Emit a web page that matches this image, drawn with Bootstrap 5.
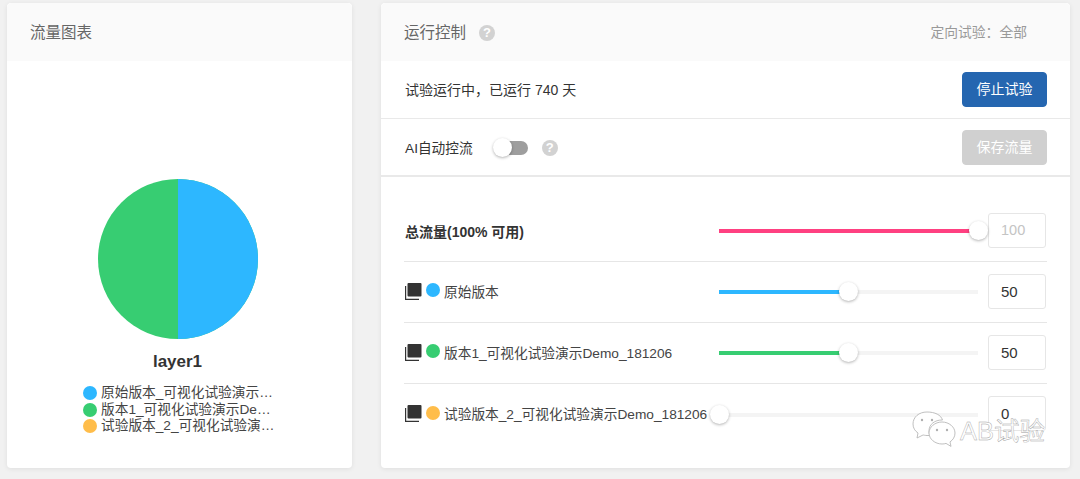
<!DOCTYPE html>
<html lang="zh-CN">
<head>
    <meta charset="UTF-8">
    <meta name="viewport" content="width=device-width, initial-scale=1.0">
    <title>运行控制</title>
    <link href="https://cdn.jsdelivr.net/npm/bootstrap@5.3.0/dist/css/bootstrap.min.css" rel="stylesheet">
    <style>
        body {
            background-color: #f1f1f1;
            color: #333;
            font-family: "Liberation Sans", "Noto Sans CJK SC", sans-serif;
            font-size: 14px;
            height: 479px;
            overflow: hidden;
        }

        .page-wrap {
            position: relative;
            gap: 29px;
            padding: 3px 10px 11px 7px;
            height: 479px;
        }

        .panel {
            border: 0;
            border-radius: 4px;
            background: #fff;
            box-shadow: 0 1px 5px rgba(0, 0, 0, 0.08);
        }

        .panel-left { width: 345px; }
        .panel-right { width: 689px; }

        .panel .card-header {
            height: 58px;
            padding: 2px 23px 0;
            background: #fafafa;
            border: 0;
            font-size: 15.5px;
            color: #666;
        }

        .panel-left .card-body { padding: 118px 0 0; }

        .pie-title {
            font-size: 17px;
            font-weight: 700;
            line-height: 20px;
            margin: 13px 0 13px;
        }

        .legend-list {
            width: 200px;
            margin-left: 76px;
        }

        .legend-row {
            height: 16.5px;
            line-height: 16.5px;
            gap: 4px;
            color: #444;
            font-size: 13.7px;
            white-space: nowrap;
        }

        .dot {
            flex: none;
            display: inline-block;
            width: 14px;
            height: 14px;
            border-radius: 50%;
        }

        .c-blue { background-color: #2db7ff; }
        .c-green { background-color: #37cd72; }
        .c-orange { background-color: #ffbd4a; }
        .c-pink { background-color: #ff4081; }

        .help-mark {
            display: inline-flex;
            align-items: center;
            justify-content: center;
            width: 16px;
            height: 16px;
            border-radius: 50%;
            background: #d2d2d2;
            color: #fff;
            font-size: 13px;
            font-weight: 700;
        }

        .head-help { margin-left: 13px; }

        .target-text {
            color: #999;
            font-size: 13.8px;
            margin-right: 20px;
        }

        .ctrl-row {
            height: 58px;
            padding: 0 23px 0 24px;
            border-bottom: 1px solid #e9e9e9;
            color: #333;
        }

        .ctrl-row + .ctrl-row {
            border-bottom-width: 2px;
        }

        .row-text { padding-top: 2px; }
        .auto-text { padding-top: 5px; font-size: 13.7px; }

        .btn-action {
            width: 85px;
            height: 35px;
            padding: 0;
            font-size: 14px;
            border-radius: 4px;
        }

        .btn-stop { background: #2566b0; border-color: #2566b0; }
        .btn.btn-save, .btn.btn-save:disabled {
            background: #d0d0d0;
            border-color: #d0d0d0;
            color: #fff;
            opacity: 1;
        }

        .toggle {
            position: relative;
            display: inline-block;
            width: 30px;
            height: 14px;
            border-radius: 7px;
            background: #9e9e9e;
            margin: 1px 14px 0 25px;
        }

        .toggle-knob {
            position: absolute;
            left: -5px;
            top: -3px;
            width: 19px;
            height: 19px;
            border-radius: 50%;
            background: #fff;
            box-shadow: 0 1px 3px rgba(0, 0, 0, 0.3);
        }

        .auto-help { margin-top: 2px; }

        .slider-list {
            padding: 24px 23px 0 23px;
        }

        .slider-row {
            height: 61px;
            border-bottom: 1px solid #e6e6e6;
        }

        .slider-row:last-child { border-bottom: 0; }

        .slider-label {
            width: 315px;
            flex: none;
            white-space: nowrap;
            padding: 2px 0 0 1px;
            color: #444;
            font-size: 13.7px;
        }

        .total-label {
            font-weight: 700;
            font-size: 14px;
            color: #333;
        }

        .copy-icon {
            flex: none;
            width: 17px;
            height: 17px;
            margin: 0 4px 4px 0;
        }

        .slider-label .dot { margin: 0 4px 6px 0; }

        .slider-box {
            position: relative;
            width: 259px;
            flex: none;
        }

        .slider-box .progress {
            height: 4px;
            border-radius: 0;
            background: #f4f4f4;
        }

        .slider-box .progress-bar { transition: none; }

        .slider-knob {
            position: absolute;
            top: -8px;
            width: 19px;
            height: 19px;
            margin-left: -9.5px;
            border-radius: 50%;
            background: #fff;
            box-shadow: 0 1px 3px rgba(0, 0, 0, 0.3);
        }

        .flow-input {
            width: 58px;
            height: 35px;
            margin: 0 0 2px 10px;
            padding: 0 12px;
            border: 1px solid #e6e6e6;
            border-radius: 3px;
            font-size: 15px;
            color: #333;
            flex: none;
        }

        .flow-input:disabled {
            background: #fff;
            color: #c4c4c4;
            font-size: 14.5px;
        }

        .watermark {
            position: absolute;
            left: 912px;
            top: 411px;
            gap: 4px;
            pointer-events: none;
        }

        .watermark-text {
            font-size: 25.5px;
            line-height: 34px;
            color: #fff;
            -webkit-text-stroke: 0.4px #a0a0a0;
            margin-top: 3px;
        }
    </style>
</head>
<body>
    <div class="page-wrap d-flex">
        <!-- traffic chart -->
        <div class="card panel panel-left">
            <div class="card-header d-flex align-items-center">流量图表</div>
            <div class="card-body">
                <svg class="d-block mx-auto" width="160" height="160" viewBox="0 0 160 160" style="transform: translateX(-2px)">
                    <circle cx="80" cy="80" r="80" fill="#37cd72"></circle>
                    <path d="M80 0 A80 80 0 0 1 80 160 Z" fill="#2db7ff"></path>
                </svg>
                <div class="pie-title text-center pe-1">layer1</div>
                <div class="legend-list">
                    <div class="legend-row d-flex align-items-center"><span class="dot c-blue"></span><span>原始版本_可视化试验演示…</span></div>
                    <div class="legend-row d-flex align-items-center"><span class="dot c-green"></span><span>版本1_可视化试验演示De…</span></div>
                    <div class="legend-row d-flex align-items-center"><span class="dot c-orange"></span><span>试验版本_2_可视化试验演…</span></div>
                </div>
            </div>
        </div>

        <!-- run control -->
        <div class="card panel panel-right">
            <div class="card-header d-flex align-items-center">
                <span class="ps-0">运行控制</span>
                <span class="help-mark head-help">?</span>
                <span class="target-text ms-auto">定向试验：全部</span>
            </div>
            <div class="ctrl-row d-flex align-items-center justify-content-between">
                <span class="row-text">试验运行中，已运行 740 天</span>
                <button type="button" class="btn btn-primary btn-action btn-stop">停止试验</button>
            </div>
            <div class="ctrl-row d-flex align-items-center">
                <span class="auto-text">AI自动控流</span>
                <span class="toggle"><span class="toggle-knob"></span></span>
                <span class="help-mark auto-help">?</span>
                <button type="button" class="btn btn-action btn-save ms-auto" disabled>保存流量</button>
            </div>

            <div class="slider-list">
                <div class="slider-row d-flex align-items-center">
                    <div class="slider-label total-label">总流量(100% 可用)</div>
                    <div class="slider-box">
                        <div class="progress"><div class="progress-bar c-pink" style="width: 100%"></div></div>
                        <span class="slider-knob" style="left: 100%"></span>
                    </div>
                    <input class="form-control flow-input" type="text" value="100" disabled>
                </div>
                <div class="slider-row d-flex align-items-center">
                    <div class="slider-label d-flex align-items-center">
                        <svg class="copy-icon" viewBox="0 0 17 17"><rect x="2.500" y="0" width="14" height="13.500" rx="1" fill="#333"></rect><path d="M0.600 3V16.400H14" fill="none" stroke="#333" stroke-width="1.200"></path></svg>
                        <span class="dot c-blue"></span>原始版本
                    </div>
                    <div class="slider-box">
                        <div class="progress"><div class="progress-bar c-blue" style="width: 50%"></div></div>
                        <span class="slider-knob" style="left: 50%"></span>
                    </div>
                    <input class="form-control flow-input" type="text" value="50">
                </div>
                <div class="slider-row d-flex align-items-center">
                    <div class="slider-label d-flex align-items-center">
                        <svg class="copy-icon" viewBox="0 0 17 17"><rect x="2.500" y="0" width="14" height="13.500" rx="1" fill="#333"></rect><path d="M0.600 3V16.400H14" fill="none" stroke="#333" stroke-width="1.200"></path></svg>
                        <span class="dot c-green"></span>版本1_可视化试验演示Demo_181206
                    </div>
                    <div class="slider-box">
                        <div class="progress"><div class="progress-bar c-green" style="width: 50%"></div></div>
                        <span class="slider-knob" style="left: 50%"></span>
                    </div>
                    <input class="form-control flow-input" type="text" value="50">
                </div>
                <div class="slider-row d-flex align-items-center">
                    <div class="slider-label d-flex align-items-center">
                        <svg class="copy-icon" viewBox="0 0 17 17"><rect x="2.500" y="0" width="14" height="13.500" rx="1" fill="#333"></rect><path d="M0.600 3V16.400H14" fill="none" stroke="#333" stroke-width="1.200"></path></svg>
                        <span class="dot c-orange"></span>试验版本_2_可视化试验演示Demo_181206
                    </div>
                    <div class="slider-box">
                        <div class="progress"><div class="progress-bar c-orange" style="width: 0%"></div></div>
                        <span class="slider-knob" style="left: 0%"></span>
                    </div>
                    <input class="form-control flow-input" type="text" value="0">
                </div>
            </div>
        </div>

        <!-- account watermark over the panel -->
        <div class="watermark d-flex">
            <svg width="44" height="36" viewBox="0 0 44 36">
                <path d="M15 1C7 1 1 6 1 13c0 4 2 7 5 9l-1 5 6-3c1 0 2 .5 4 .5h3c-1-1.500-1-3-1-4.500 0-7 6-11 13-11h.5C29 4 23 1 15 1Z" fill="#fff" stroke="#b0b0b0" stroke-width=".8"></path>
                <path d="M30 11c-7 0-13 5-13 11s6 11 13 11c1.500 0 3-.2 4-.6l5 3-1-4.500c3-2 5-5 5-8.900 0-6-6-11-13-11Z" fill="#fff" stroke="#b0b0b0" stroke-width=".8"></path>
                <circle cx="10" cy="9" r="1.200" fill="#b0b0b0"></circle>
                <circle cx="20" cy="9" r="1.200" fill="#b0b0b0"></circle>
                <circle cx="25" cy="19" r="1.200" fill="#b0b0b0"></circle>
                <circle cx="35" cy="19" r="1.200" fill="#b0b0b0"></circle>
            </svg>
            <span class="watermark-text">AB试验</span>
        </div>
    </div>

    <script src="https://cdn.jsdelivr.net/npm/bootstrap@5.3.0/dist/js/bootstrap.bundle.min.js"></script>
</body>
</html>
